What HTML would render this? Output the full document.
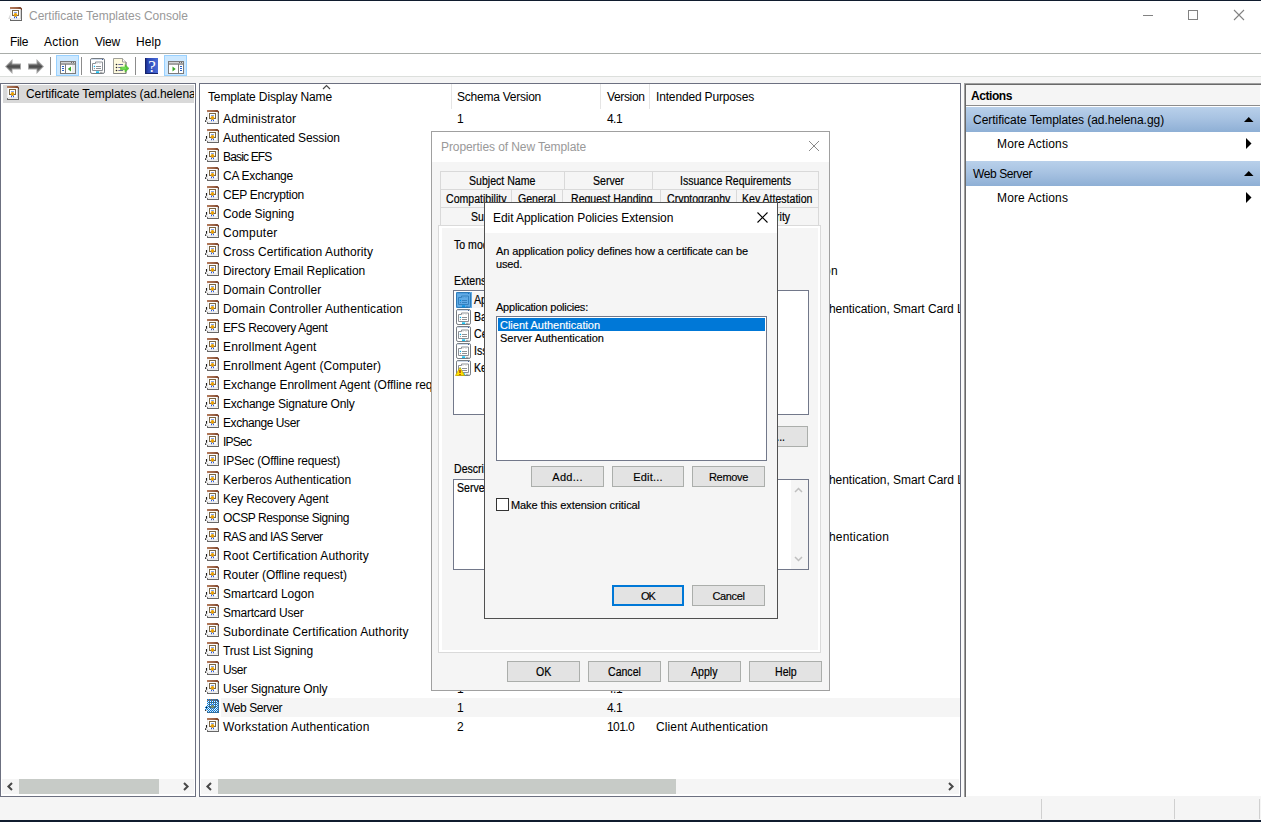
<!DOCTYPE html>
<html><head><meta charset="utf-8"><title>Certificate Templates Console</title><style>
html,body{margin:0;padding:0}
body{width:1261px;height:822px;overflow:hidden;background:#fff;position:relative;font-family:"Liberation Sans",sans-serif}
.abs{position:absolute;box-sizing:content-box}
.ic{position:absolute;overflow:visible}
.tx{position:absolute;white-space:pre;line-height:16px;color:#000}
.s{font:12px/16px "Liberation Sans",sans-serif}
.sb{font:bold 12px/16px "Liberation Sans",sans-serif}
.t{font:11px/16px "Liberation Sans",sans-serif;-webkit-text-stroke:.15px}
.m{font:12px/16px "Liberation Sans",sans-serif;-webkit-text-stroke:.2px}
</style></head>
<body>
<svg width="0" height="0" style="position:absolute"><defs>
<linearGradient id="gb" x1="0" y1="0" x2="1" y2="0"><stop offset="0" stop-color="#b47c5e"/><stop offset=".6" stop-color="#9c6244"/><stop offset="1" stop-color="#6e3620"/></linearGradient>
<pattern id="dith" width="2" height="2" patternUnits="userSpaceOnUse"><rect x="0" y="0" width="1" height="1" fill="#0078d7"/><rect x="1" y="1" width="1" height="1" fill="#0078d7"/></pattern>

</defs></svg>
<div class="abs" style="left:0;top:0;width:1261px;height:1px;background:#101c2e"></div>
<div class="abs" style="left:0;top:820px;width:1261px;height:2px;background:#101c2e"></div>
<svg class="ic" style="left:8px;top:7px" width="14" height="14" viewBox="-2 0 14 14" ><rect x="0" y="1" width="12" height="13" fill="#fcfcfc"/> <path d="M0 0h10.500l1.500 1.500v2.500h-1v-2h-11z" fill="url(#gb)"/> <rect x="10" y="2" width="1" height="10" fill="#d4d4d4"/> <rect x="11" y="3" width="1" height="11" fill="#6a6a6a"/> <rect x="0" y="2" width="1" height="10" fill="#ececec"/> <rect x="1" y="11.500" width="9.500" height="1" fill="#dcdcdc"/> <rect x="0" y="13" width="12" height="1" fill="#666"/> <rect x="0" y="12" width="1" height="1" fill="#777"/> <rect x="2.500" y="3.500" width="6" height="5" fill="#fff" stroke="#7a6644" stroke-width="1"/> <rect x="4" y="5" width="3" height="1" fill="#86a4ea"/> <rect x="4" y="9.500" width="1" height="1.700" fill="#2456e0"/><rect x="6" y="9.500" width="1" height="1.700" fill="#2456e0"/> <circle cx="5.500" cy="7.700" r="1.800" fill="#e8a008"/> <path d="M4.300 8.500l1.200 1.800 1.200-1.800z" fill="#dc9400"/><path d="M0 7.500l-1.800 4.500h1.800z" fill="#dadada"/></svg>
<span class="tx s" style="left:29px;top:8px;letter-spacing:-0.01px;color:#999">Certificate Templates Console</span>
<svg class="ic" style="left:1130px;top:1px" width="131" height="30"><path d="M13 14.500h10" stroke="#828282" stroke-width="1"/><rect x="58.500" y="9.500" width="9" height="9" fill="none" stroke="#828282"/><path d="M104 9l10 10M114 9l-10 10" stroke="#828282" stroke-width="1.100"/></svg>
<span class="tx s" style="left:10px;top:34px;letter-spacing:-0.34px;">File</span>
<span class="tx s" style="left:44px;top:34px;letter-spacing:0.27px;">Action</span>
<span class="tx s" style="left:95px;top:34px;letter-spacing:-0.2px;">View</span>
<span class="tx s" style="left:136px;top:34px;letter-spacing:0.08px;">Help</span>
<div class="abs" style="left:0;top:53px;width:1261px;height:1px;background:#a9adaa"></div>
<div class="abs" style="left:0;top:76px;width:1261px;height:1px;background:#dcdfdc"></div>
<div class="abs" style="left:0;top:77px;width:1261px;height:6px;background:#f5f5f5"></div>
<svg class="ic" style="left:0;top:54px" width="200" height="22">
<defs><linearGradient id="ga" x1="0" y1="0" x2="0" y2="1"><stop offset="0" stop-color="#8a8a8a"/><stop offset=".5" stop-color="#4e4e4e"/><stop offset="1" stop-color="#7c7c7c"/></linearGradient>
<linearGradient id="gh" x1="0" y1="0" x2="1" y2="0"><stop offset="0" stop-color="#16287c"/><stop offset=".25" stop-color="#2a46b4"/><stop offset="1" stop-color="#4a6cd8"/></linearGradient></defs>
<path d="M5 12.500l7.500-7.500v4.500h8.500v6h-8.500v4.500z" fill="#a6a6a6"/><path d="M6.400 12.500l5.300-5.300v3.200h8.300v4.200h-8.300v3.200z" fill="url(#ga)"/>
<path d="M44 12.500l-7.500-7.500v4.500h-8.500v6h8.500v4.500z" fill="#a6a6a6"/><path d="M42.600 12.500l-5.300-5.300v3.200h-8.300v4.200h8.300v3.200z" fill="url(#ga)"/>
<path d="M50.500 3v18M81.500 3v18M135.500 3v18" stroke="#8c8c8c"/>
<rect x="56.500" y="1.500" width="22" height="20" fill="#cce8ff" stroke="#99d1ff"/>
<rect x="164.500" y="1.500" width="22" height="20" fill="#cce8ff" stroke="#99d1ff"/>
<!-- show/hide tree -->
<g transform="translate(60,7)"><rect x=".5" y=".5" width="15" height="12" fill="#fff" stroke="#7b7b7b"/><path d="M1 3h14" stroke="#7b7b7b" stroke-width="1.400"/><path d="M1 1.500h14" stroke="#d4d4d4"/><path d="M11 1.500h1M13 1.500h1" stroke="#6a6a6a"/><path d="M5.500 3v10" stroke="#7b7b7b"/><path d="M2 5.500h2M2 7.500h2M2 9.500h2" stroke="#2a62c8"/><path d="M11 5.500v5l-3.200-2.500z" fill="#3aa827"/><rect x="12" y="4" width="3" height="8" fill="#eee"/></g>
<!-- action pane -->
<g transform="translate(168,7)"><rect x=".5" y=".5" width="15" height="12" fill="#fff" stroke="#7b7b7b"/><path d="M1 3h14" stroke="#7b7b7b" stroke-width="1.400"/><path d="M1 1.500h14" stroke="#d4d4d4"/><path d="M11 1.500h1M13 1.500h1" stroke="#6a6a6a"/><path d="M10.500 3v10" stroke="#7b7b7b"/><path d="M12 5.500h2M12 7.500h2M12 9.500h2" stroke="#2a62c8"/><path d="M4.500 5.500v5l3.200-2.500z" fill="#3aa827"/></g>
<!-- properties -->
<g transform="translate(90,4)"><rect x=".5" y=".5" width="14" height="15" rx="1.600" fill="#fff" stroke="#767c82"/> <path d="M1.500 1.500h11" stroke="#d0dcec"/><rect x="12" y="1" width="1" height="1" fill="#3a5a9a"/> <path d="M2.500 12.500v-7h3v-1.500h7v8.500z" fill="#fff" stroke="#8c9096"/> <path d="M6 5.500h2M9 5.500h2" stroke="#e8e8e8"/> <rect x="3.800" y="7.800" width="1.300" height="1.300" fill="#00b0f0"/><rect x="3.900" y="10" width="1.100" height="1.100" fill="#9a9a9a"/> <path d="M6 8.500h5M6 10.500h5" stroke="#8e9296"/> <rect x="6" y="13.300" width="3.200" height="1.700" fill="#1cc0f0"/><rect x="10" y="13.800" width="2.600" height="1.200" fill="#b0b0b0"/></g>
<!-- export list -->
<g transform="translate(113,4)"><path d="M.5 .5h9l3.500 3.500v11.500h-12.500z" fill="#fdf9dc" stroke="#a0a098"/><path d="M13 4v11.500h-12.500" fill="none" stroke="#828282"/><path d="M9.500 .5v3.500h3.500" fill="#fff" stroke="#a0a098"/><circle cx="3.500" cy="6.500" r=".8" fill="#222"/><circle cx="3.500" cy="9.500" r=".8" fill="#222"/><circle cx="3.500" cy="12.500" r=".8" fill="#222"/><path d="M5.300 6.500h4.700M5.300 9.500h3M5.300 12.500h4.700" stroke="#6a6c9c"/><path d="M7.500 9h4.500v-2.500l4 3.900-4 3.900v-2.500h-4.500z" fill="#58cc38" stroke="#48b82c" stroke-width=".5"/><path d="M8.500 10h4.500" stroke="#9ae880" stroke-width=".8"/></g>
<!-- help -->
<g transform="translate(145,4)"><rect x="0" y="0" width="13" height="16" fill="url(#gh)"/><path d="M.5 0v15.500h12.500" stroke="#14226a" fill="none"/><text x="7" y="14" font-family="Liberation Serif" font-size="17" fill="#fff" text-anchor="middle">?</text></g>
</svg>
<div class="abs" style="left:0;top:83px;width:194px;height:712px;border:1px solid #6c7080;background:#fff"></div>
<div class="abs" style="left:199px;top:83px;width:760px;height:712px;border:1px solid #6c7080;background:#fff"></div>
<div class="abs" style="left:964px;top:83px;width:297px;height:714px;background:#a0a0a0"></div>
<div class="abs" style="left:965px;top:84px;width:296px;height:713px;background:#696969"></div>
<div class="abs" style="left:966px;top:85px;width:295px;height:712px;background:#fff"></div>
<div class="abs" style="left:966px;top:796px;width:295px;height:1px;background:#f5f5f5"></div>
<div class="abs" style="left:0;top:797px;width:1261px;height:23px;background:#f5f5f5"></div>
<div class="abs" style="left:1041px;top:799px;width:1px;height:20px;background:#d0d0d0"></div>
<div class="abs" style="left:1174px;top:799px;width:1px;height:20px;background:#d0d0d0"></div>
<div class="abs" style="left:1259px;top:799px;width:1px;height:20px;background:#d0d0d0"></div>
<div class="abs" style="left:196px;top:83px;width:3px;height:714px;background:#fafafa"></div>
<div class="abs" style="left:961px;top:83px;width:3px;height:714px;background:#fafafa"></div>
<div class="abs" style="left:3px;top:85px;width:191px;height:18px;background:#d9d9d9"></div>
<svg class="ic" style="left:5px;top:86px" width="14" height="14" viewBox="-2 0 14 14" ><rect x="0" y="1" width="12" height="13" fill="#fcfcfc"/> <path d="M0 0h10.500l1.500 1.500v2.500h-1v-2h-11z" fill="url(#gb)"/> <rect x="10" y="2" width="1" height="10" fill="#d4d4d4"/> <rect x="11" y="3" width="1" height="11" fill="#6a6a6a"/> <rect x="0" y="2" width="1" height="10" fill="#ececec"/> <rect x="1" y="11.500" width="9.500" height="1" fill="#dcdcdc"/> <rect x="0" y="13" width="12" height="1" fill="#666"/> <rect x="0" y="12" width="1" height="1" fill="#777"/> <rect x="2.500" y="3.500" width="6" height="5" fill="#fff" stroke="#7a6644" stroke-width="1"/> <rect x="4" y="5" width="3" height="1" fill="#86a4ea"/> <rect x="4" y="9.500" width="1" height="1.700" fill="#2456e0"/><rect x="6" y="9.500" width="1" height="1.700" fill="#2456e0"/> <circle cx="5.500" cy="7.700" r="1.800" fill="#e8a008"/> <path d="M4.300 8.500l1.200 1.800 1.200-1.800z" fill="#dc9400"/><path d="M0 7.500l-1.800 4.500h1.800z" fill="#dadada"/></svg>
<div class="abs" style="left:26px;top:85px;width:168px;height:18px;overflow:hidden"><span class="tx s" style="left:0px;top:1px;letter-spacing:-0.07px;">Certificate Templates (ad.helena.gg)</span></div>
<div class="abs" style="left:2px;top:779px;width:192px;height:15px;background:#f5f5f5"></div><div class="abs" style="left:19px;top:779px;width:140px;height:15px;background:#c7cbc7"></div><svg class="ic" style="left:2px;top:779px" width="192" height="15"><path d="M10 4l-3.600 3.500 3.600 3.500" stroke="#484848" stroke-width="2" fill="none"/><path d="M182 4l3.600 3.500-3.600 3.500" stroke="#484848" stroke-width="2" fill="none"/></svg>
<div class="abs" style="left:201px;top:779px;width:758px;height:15px;background:#f5f5f5"></div><div class="abs" style="left:218px;top:779px;width:458px;height:15px;background:#c7cbc7"></div><svg class="ic" style="left:201px;top:779px" width="758" height="15"><path d="M10 4l-3.600 3.500 3.600 3.500" stroke="#484848" stroke-width="2" fill="none"/><path d="M748 4l3.600 3.500-3.600 3.500" stroke="#484848" stroke-width="2" fill="none"/></svg>
<div class="abs" style="left:451px;top:84px;width:1px;height:25px;background:#e5e5e5"></div>
<div class="abs" style="left:600px;top:84px;width:1px;height:25px;background:#e5e5e5"></div>
<div class="abs" style="left:649px;top:84px;width:1px;height:25px;background:#e5e5e5"></div>
<svg class="ic" style="left:321px;top:84px" width="12" height="6"><path d="M2 5l3.500-3.500 3.500 3.500" stroke="#4a4a4a" stroke-width="1.200" fill="none"/></svg>
<span class="tx s" style="left:208px;top:89px;letter-spacing:-0.13px;">Template Display Name</span>
<span class="tx s" style="left:457px;top:89px;letter-spacing:-0.24px;">Schema Version</span>
<span class="tx s" style="left:607px;top:89px;letter-spacing:-0.36px;">Version</span>
<span class="tx s" style="left:656px;top:89px;letter-spacing:-0.16px;">Intended Purposes</span>
<div class="abs" style="left:200px;top:84px;width:760px;height:695px;overflow:hidden">
<svg class="ic" style="left:5px;top:26px" width="14" height="14" viewBox="-2 0 14 14" ><rect x="0" y="1" width="12" height="13" fill="#fcfcfc"/> <path d="M0 0h10.500l1.500 1.500v2.500h-1v-2h-11z" fill="url(#gb)"/> <rect x="10" y="2" width="1" height="10" fill="#d4d4d4"/> <rect x="11" y="3" width="1" height="11" fill="#6a6a6a"/> <rect x="0" y="2" width="1" height="10" fill="#ececec"/> <rect x="1" y="11.500" width="9.500" height="1" fill="#dcdcdc"/> <rect x="0" y="13" width="12" height="1" fill="#666"/> <rect x="0" y="12" width="1" height="1" fill="#777"/> <rect x="2.500" y="3.500" width="6" height="5" fill="#fff" stroke="#7a6644" stroke-width="1"/> <rect x="4" y="5" width="3" height="1" fill="#86a4ea"/> <rect x="4" y="9.500" width="1" height="1.700" fill="#2456e0"/><rect x="6" y="9.500" width="1" height="1.700" fill="#2456e0"/> <circle cx="5.500" cy="7.700" r="1.800" fill="#e8a008"/> <path d="M4.300 8.500l1.200 1.800 1.200-1.800z" fill="#dc9400"/><path d="M-.5 7v2.800M-1.300 10.200v1.700" stroke="#1a1a1a" stroke-width="1.100"/></svg>
<span class="tx s" style="left:23px;top:27px;letter-spacing:0.2px;">Administrator</span>
<span class="tx s" style="left:257px;top:27px;">1</span>
<span class="tx s" style="left:407px;top:27px;letter-spacing:-0.56px;">4.1</span>
<svg class="ic" style="left:5px;top:45px" width="14" height="14" viewBox="-2 0 14 14" ><rect x="0" y="1" width="12" height="13" fill="#fcfcfc"/> <path d="M0 0h10.500l1.500 1.500v2.500h-1v-2h-11z" fill="url(#gb)"/> <rect x="10" y="2" width="1" height="10" fill="#d4d4d4"/> <rect x="11" y="3" width="1" height="11" fill="#6a6a6a"/> <rect x="0" y="2" width="1" height="10" fill="#ececec"/> <rect x="1" y="11.500" width="9.500" height="1" fill="#dcdcdc"/> <rect x="0" y="13" width="12" height="1" fill="#666"/> <rect x="0" y="12" width="1" height="1" fill="#777"/> <rect x="2.500" y="3.500" width="6" height="5" fill="#fff" stroke="#7a6644" stroke-width="1"/> <rect x="4" y="5" width="3" height="1" fill="#86a4ea"/> <rect x="4" y="9.500" width="1" height="1.700" fill="#2456e0"/><rect x="6" y="9.500" width="1" height="1.700" fill="#2456e0"/> <circle cx="5.500" cy="7.700" r="1.800" fill="#e8a008"/> <path d="M4.300 8.500l1.200 1.800 1.200-1.800z" fill="#dc9400"/><path d="M-.5 7v2.800M-1.300 10.200v1.700" stroke="#1a1a1a" stroke-width="1.100"/></svg>
<span class="tx s" style="left:23px;top:46px;letter-spacing:-0.12px;">Authenticated Session</span>
<span class="tx s" style="left:257px;top:46px;">1</span>
<span class="tx s" style="left:407px;top:46px;letter-spacing:-0.56px;">3.1</span>
<svg class="ic" style="left:5px;top:64px" width="14" height="14" viewBox="-2 0 14 14" ><rect x="0" y="1" width="12" height="13" fill="#fcfcfc"/> <path d="M0 0h10.500l1.500 1.500v2.500h-1v-2h-11z" fill="url(#gb)"/> <rect x="10" y="2" width="1" height="10" fill="#d4d4d4"/> <rect x="11" y="3" width="1" height="11" fill="#6a6a6a"/> <rect x="0" y="2" width="1" height="10" fill="#ececec"/> <rect x="1" y="11.500" width="9.500" height="1" fill="#dcdcdc"/> <rect x="0" y="13" width="12" height="1" fill="#666"/> <rect x="0" y="12" width="1" height="1" fill="#777"/> <rect x="2.500" y="3.500" width="6" height="5" fill="#fff" stroke="#7a6644" stroke-width="1"/> <rect x="4" y="5" width="3" height="1" fill="#86a4ea"/> <rect x="4" y="9.500" width="1" height="1.700" fill="#2456e0"/><rect x="6" y="9.500" width="1" height="1.700" fill="#2456e0"/> <circle cx="5.500" cy="7.700" r="1.800" fill="#e8a008"/> <path d="M4.300 8.500l1.200 1.800 1.200-1.800z" fill="#dc9400"/><path d="M-.5 7v2.800M-1.300 10.200v1.700" stroke="#1a1a1a" stroke-width="1.100"/></svg>
<span class="tx s" style="left:23px;top:65px;letter-spacing:-0.84px;">Basic EFS</span>
<span class="tx s" style="left:257px;top:65px;">1</span>
<span class="tx s" style="left:407px;top:65px;letter-spacing:-0.56px;">3.1</span>
<svg class="ic" style="left:5px;top:83px" width="14" height="14" viewBox="-2 0 14 14" ><rect x="0" y="1" width="12" height="13" fill="#fcfcfc"/> <path d="M0 0h10.500l1.500 1.500v2.500h-1v-2h-11z" fill="url(#gb)"/> <rect x="10" y="2" width="1" height="10" fill="#d4d4d4"/> <rect x="11" y="3" width="1" height="11" fill="#6a6a6a"/> <rect x="0" y="2" width="1" height="10" fill="#ececec"/> <rect x="1" y="11.500" width="9.500" height="1" fill="#dcdcdc"/> <rect x="0" y="13" width="12" height="1" fill="#666"/> <rect x="0" y="12" width="1" height="1" fill="#777"/> <rect x="2.500" y="3.500" width="6" height="5" fill="#fff" stroke="#7a6644" stroke-width="1"/> <rect x="4" y="5" width="3" height="1" fill="#86a4ea"/> <rect x="4" y="9.500" width="1" height="1.700" fill="#2456e0"/><rect x="6" y="9.500" width="1" height="1.700" fill="#2456e0"/> <circle cx="5.500" cy="7.700" r="1.800" fill="#e8a008"/> <path d="M4.300 8.500l1.200 1.800 1.200-1.800z" fill="#dc9400"/><path d="M-.5 7v2.800M-1.300 10.200v1.700" stroke="#1a1a1a" stroke-width="1.100"/></svg>
<span class="tx s" style="left:23px;top:84px;letter-spacing:-0.25px;">CA Exchange</span>
<span class="tx s" style="left:257px;top:84px;">2</span>
<span class="tx s" style="left:407px;top:84px;letter-spacing:-0.61px;">106.0</span>
<span class="tx s" style="left:456px;top:84px;letter-spacing:-0.14px;">Private Key Archival</span>
<svg class="ic" style="left:5px;top:102px" width="14" height="14" viewBox="-2 0 14 14" ><rect x="0" y="1" width="12" height="13" fill="#fcfcfc"/> <path d="M0 0h10.500l1.500 1.500v2.500h-1v-2h-11z" fill="url(#gb)"/> <rect x="10" y="2" width="1" height="10" fill="#d4d4d4"/> <rect x="11" y="3" width="1" height="11" fill="#6a6a6a"/> <rect x="0" y="2" width="1" height="10" fill="#ececec"/> <rect x="1" y="11.500" width="9.500" height="1" fill="#dcdcdc"/> <rect x="0" y="13" width="12" height="1" fill="#666"/> <rect x="0" y="12" width="1" height="1" fill="#777"/> <rect x="2.500" y="3.500" width="6" height="5" fill="#fff" stroke="#7a6644" stroke-width="1"/> <rect x="4" y="5" width="3" height="1" fill="#86a4ea"/> <rect x="4" y="9.500" width="1" height="1.700" fill="#2456e0"/><rect x="6" y="9.500" width="1" height="1.700" fill="#2456e0"/> <circle cx="5.500" cy="7.700" r="1.800" fill="#e8a008"/> <path d="M4.300 8.500l1.200 1.800 1.200-1.800z" fill="#dc9400"/><path d="M-.5 7v2.800M-1.300 10.200v1.700" stroke="#1a1a1a" stroke-width="1.100"/></svg>
<span class="tx s" style="left:23px;top:103px;letter-spacing:-0.25px;">CEP Encryption</span>
<span class="tx s" style="left:257px;top:103px;">1</span>
<span class="tx s" style="left:407px;top:103px;letter-spacing:-0.56px;">4.1</span>
<svg class="ic" style="left:5px;top:121px" width="14" height="14" viewBox="-2 0 14 14" ><rect x="0" y="1" width="12" height="13" fill="#fcfcfc"/> <path d="M0 0h10.500l1.500 1.500v2.500h-1v-2h-11z" fill="url(#gb)"/> <rect x="10" y="2" width="1" height="10" fill="#d4d4d4"/> <rect x="11" y="3" width="1" height="11" fill="#6a6a6a"/> <rect x="0" y="2" width="1" height="10" fill="#ececec"/> <rect x="1" y="11.500" width="9.500" height="1" fill="#dcdcdc"/> <rect x="0" y="13" width="12" height="1" fill="#666"/> <rect x="0" y="12" width="1" height="1" fill="#777"/> <rect x="2.500" y="3.500" width="6" height="5" fill="#fff" stroke="#7a6644" stroke-width="1"/> <rect x="4" y="5" width="3" height="1" fill="#86a4ea"/> <rect x="4" y="9.500" width="1" height="1.700" fill="#2456e0"/><rect x="6" y="9.500" width="1" height="1.700" fill="#2456e0"/> <circle cx="5.500" cy="7.700" r="1.800" fill="#e8a008"/> <path d="M4.300 8.500l1.200 1.800 1.200-1.800z" fill="#dc9400"/><path d="M-.5 7v2.800M-1.300 10.200v1.700" stroke="#1a1a1a" stroke-width="1.100"/></svg>
<span class="tx s" style="left:23px;top:122px;letter-spacing:-0.09px;">Code Signing</span>
<span class="tx s" style="left:257px;top:122px;">1</span>
<span class="tx s" style="left:407px;top:122px;letter-spacing:-0.56px;">3.1</span>
<svg class="ic" style="left:5px;top:140px" width="14" height="14" viewBox="-2 0 14 14" ><rect x="0" y="1" width="12" height="13" fill="#fcfcfc"/> <path d="M0 0h10.500l1.500 1.500v2.500h-1v-2h-11z" fill="url(#gb)"/> <rect x="10" y="2" width="1" height="10" fill="#d4d4d4"/> <rect x="11" y="3" width="1" height="11" fill="#6a6a6a"/> <rect x="0" y="2" width="1" height="10" fill="#ececec"/> <rect x="1" y="11.500" width="9.500" height="1" fill="#dcdcdc"/> <rect x="0" y="13" width="12" height="1" fill="#666"/> <rect x="0" y="12" width="1" height="1" fill="#777"/> <rect x="2.500" y="3.500" width="6" height="5" fill="#fff" stroke="#7a6644" stroke-width="1"/> <rect x="4" y="5" width="3" height="1" fill="#86a4ea"/> <rect x="4" y="9.500" width="1" height="1.700" fill="#2456e0"/><rect x="6" y="9.500" width="1" height="1.700" fill="#2456e0"/> <circle cx="5.500" cy="7.700" r="1.800" fill="#e8a008"/> <path d="M4.300 8.500l1.200 1.800 1.200-1.800z" fill="#dc9400"/><path d="M-.5 7v2.800M-1.300 10.200v1.700" stroke="#1a1a1a" stroke-width="1.100"/></svg>
<span class="tx s" style="left:23px;top:141px;letter-spacing:0.23px;">Computer</span>
<span class="tx s" style="left:257px;top:141px;">1</span>
<span class="tx s" style="left:407px;top:141px;letter-spacing:-0.56px;">5.1</span>
<svg class="ic" style="left:5px;top:159px" width="14" height="14" viewBox="-2 0 14 14" ><rect x="0" y="1" width="12" height="13" fill="#fcfcfc"/> <path d="M0 0h10.500l1.500 1.500v2.500h-1v-2h-11z" fill="url(#gb)"/> <rect x="10" y="2" width="1" height="10" fill="#d4d4d4"/> <rect x="11" y="3" width="1" height="11" fill="#6a6a6a"/> <rect x="0" y="2" width="1" height="10" fill="#ececec"/> <rect x="1" y="11.500" width="9.500" height="1" fill="#dcdcdc"/> <rect x="0" y="13" width="12" height="1" fill="#666"/> <rect x="0" y="12" width="1" height="1" fill="#777"/> <rect x="2.500" y="3.500" width="6" height="5" fill="#fff" stroke="#7a6644" stroke-width="1"/> <rect x="4" y="5" width="3" height="1" fill="#86a4ea"/> <rect x="4" y="9.500" width="1" height="1.700" fill="#2456e0"/><rect x="6" y="9.500" width="1" height="1.700" fill="#2456e0"/> <circle cx="5.500" cy="7.700" r="1.800" fill="#e8a008"/> <path d="M4.300 8.500l1.200 1.800 1.200-1.800z" fill="#dc9400"/><path d="M-.5 7v2.800M-1.300 10.200v1.700" stroke="#1a1a1a" stroke-width="1.100"/></svg>
<span class="tx s" style="left:23px;top:160px;letter-spacing:0.07px;">Cross Certification Authority</span>
<span class="tx s" style="left:257px;top:160px;">2</span>
<span class="tx s" style="left:407px;top:160px;letter-spacing:-0.61px;">105.0</span>
<svg class="ic" style="left:5px;top:178px" width="14" height="14" viewBox="-2 0 14 14" ><rect x="0" y="1" width="12" height="13" fill="#fcfcfc"/> <path d="M0 0h10.500l1.500 1.500v2.500h-1v-2h-11z" fill="url(#gb)"/> <rect x="10" y="2" width="1" height="10" fill="#d4d4d4"/> <rect x="11" y="3" width="1" height="11" fill="#6a6a6a"/> <rect x="0" y="2" width="1" height="10" fill="#ececec"/> <rect x="1" y="11.500" width="9.500" height="1" fill="#dcdcdc"/> <rect x="0" y="13" width="12" height="1" fill="#666"/> <rect x="0" y="12" width="1" height="1" fill="#777"/> <rect x="2.500" y="3.500" width="6" height="5" fill="#fff" stroke="#7a6644" stroke-width="1"/> <rect x="4" y="5" width="3" height="1" fill="#86a4ea"/> <rect x="4" y="9.500" width="1" height="1.700" fill="#2456e0"/><rect x="6" y="9.500" width="1" height="1.700" fill="#2456e0"/> <circle cx="5.500" cy="7.700" r="1.800" fill="#e8a008"/> <path d="M4.300 8.500l1.200 1.800 1.200-1.800z" fill="#dc9400"/><path d="M-.5 7v2.800M-1.300 10.200v1.700" stroke="#1a1a1a" stroke-width="1.100"/></svg>
<span class="tx s" style="left:23px;top:179px;letter-spacing:-0.07px;">Directory Email Replication</span>
<span class="tx s" style="left:257px;top:179px;">2</span>
<span class="tx s" style="left:407px;top:179px;letter-spacing:-0.43px;">115.0</span>
<span class="tx s" style="left:456px;top:179px;letter-spacing:-0.18px;">Directory Service Email Replicati</span>
<span class="tx s" style="left:624px;top:179px;letter-spacing:0.32px;">on</span>
<svg class="ic" style="left:5px;top:197px" width="14" height="14" viewBox="-2 0 14 14" ><rect x="0" y="1" width="12" height="13" fill="#fcfcfc"/> <path d="M0 0h10.500l1.500 1.500v2.500h-1v-2h-11z" fill="url(#gb)"/> <rect x="10" y="2" width="1" height="10" fill="#d4d4d4"/> <rect x="11" y="3" width="1" height="11" fill="#6a6a6a"/> <rect x="0" y="2" width="1" height="10" fill="#ececec"/> <rect x="1" y="11.500" width="9.500" height="1" fill="#dcdcdc"/> <rect x="0" y="13" width="12" height="1" fill="#666"/> <rect x="0" y="12" width="1" height="1" fill="#777"/> <rect x="2.500" y="3.500" width="6" height="5" fill="#fff" stroke="#7a6644" stroke-width="1"/> <rect x="4" y="5" width="3" height="1" fill="#86a4ea"/> <rect x="4" y="9.500" width="1" height="1.700" fill="#2456e0"/><rect x="6" y="9.500" width="1" height="1.700" fill="#2456e0"/> <circle cx="5.500" cy="7.700" r="1.800" fill="#e8a008"/> <path d="M4.300 8.500l1.200 1.800 1.200-1.800z" fill="#dc9400"/><path d="M-.5 7v2.800M-1.300 10.200v1.700" stroke="#1a1a1a" stroke-width="1.100"/></svg>
<span class="tx s" style="left:23px;top:198px;letter-spacing:0.09px;">Domain Controller</span>
<span class="tx s" style="left:257px;top:198px;">1</span>
<span class="tx s" style="left:407px;top:198px;letter-spacing:-0.56px;">4.1</span>
<svg class="ic" style="left:5px;top:216px" width="14" height="14" viewBox="-2 0 14 14" ><rect x="0" y="1" width="12" height="13" fill="#fcfcfc"/> <path d="M0 0h10.500l1.500 1.500v2.500h-1v-2h-11z" fill="url(#gb)"/> <rect x="10" y="2" width="1" height="10" fill="#d4d4d4"/> <rect x="11" y="3" width="1" height="11" fill="#6a6a6a"/> <rect x="0" y="2" width="1" height="10" fill="#ececec"/> <rect x="1" y="11.500" width="9.500" height="1" fill="#dcdcdc"/> <rect x="0" y="13" width="12" height="1" fill="#666"/> <rect x="0" y="12" width="1" height="1" fill="#777"/> <rect x="2.500" y="3.500" width="6" height="5" fill="#fff" stroke="#7a6644" stroke-width="1"/> <rect x="4" y="5" width="3" height="1" fill="#86a4ea"/> <rect x="4" y="9.500" width="1" height="1.700" fill="#2456e0"/><rect x="6" y="9.500" width="1" height="1.700" fill="#2456e0"/> <circle cx="5.500" cy="7.700" r="1.800" fill="#e8a008"/> <path d="M4.300 8.500l1.200 1.800 1.200-1.800z" fill="#dc9400"/><path d="M-.5 7v2.800M-1.300 10.200v1.700" stroke="#1a1a1a" stroke-width="1.100"/></svg>
<span class="tx s" style="left:23px;top:217px;letter-spacing:0.14px;">Domain Controller Authentication</span>
<span class="tx s" style="left:257px;top:217px;">2</span>
<span class="tx s" style="left:407px;top:217px;letter-spacing:-0.43px;">110.0</span>
<span class="tx s" style="left:456px;top:217px;">Client Authentication, Server Aut</span>
<span class="tx s" style="left:629px;top:217px;letter-spacing:-0.06px;">hentication, Smart Card Logon</span>
<svg class="ic" style="left:5px;top:235px" width="14" height="14" viewBox="-2 0 14 14" ><rect x="0" y="1" width="12" height="13" fill="#fcfcfc"/> <path d="M0 0h10.500l1.500 1.500v2.500h-1v-2h-11z" fill="url(#gb)"/> <rect x="10" y="2" width="1" height="10" fill="#d4d4d4"/> <rect x="11" y="3" width="1" height="11" fill="#6a6a6a"/> <rect x="0" y="2" width="1" height="10" fill="#ececec"/> <rect x="1" y="11.500" width="9.500" height="1" fill="#dcdcdc"/> <rect x="0" y="13" width="12" height="1" fill="#666"/> <rect x="0" y="12" width="1" height="1" fill="#777"/> <rect x="2.500" y="3.500" width="6" height="5" fill="#fff" stroke="#7a6644" stroke-width="1"/> <rect x="4" y="5" width="3" height="1" fill="#86a4ea"/> <rect x="4" y="9.500" width="1" height="1.700" fill="#2456e0"/><rect x="6" y="9.500" width="1" height="1.700" fill="#2456e0"/> <circle cx="5.500" cy="7.700" r="1.800" fill="#e8a008"/> <path d="M4.300 8.500l1.200 1.800 1.200-1.800z" fill="#dc9400"/><path d="M-.5 7v2.800M-1.300 10.200v1.700" stroke="#1a1a1a" stroke-width="1.100"/></svg>
<span class="tx s" style="left:23px;top:236px;letter-spacing:-0.38px;">EFS Recovery Agent</span>
<span class="tx s" style="left:257px;top:236px;">1</span>
<span class="tx s" style="left:407px;top:236px;letter-spacing:-0.56px;">6.1</span>
<svg class="ic" style="left:5px;top:254px" width="14" height="14" viewBox="-2 0 14 14" ><rect x="0" y="1" width="12" height="13" fill="#fcfcfc"/> <path d="M0 0h10.500l1.500 1.500v2.500h-1v-2h-11z" fill="url(#gb)"/> <rect x="10" y="2" width="1" height="10" fill="#d4d4d4"/> <rect x="11" y="3" width="1" height="11" fill="#6a6a6a"/> <rect x="0" y="2" width="1" height="10" fill="#ececec"/> <rect x="1" y="11.500" width="9.500" height="1" fill="#dcdcdc"/> <rect x="0" y="13" width="12" height="1" fill="#666"/> <rect x="0" y="12" width="1" height="1" fill="#777"/> <rect x="2.500" y="3.500" width="6" height="5" fill="#fff" stroke="#7a6644" stroke-width="1"/> <rect x="4" y="5" width="3" height="1" fill="#86a4ea"/> <rect x="4" y="9.500" width="1" height="1.700" fill="#2456e0"/><rect x="6" y="9.500" width="1" height="1.700" fill="#2456e0"/> <circle cx="5.500" cy="7.700" r="1.800" fill="#e8a008"/> <path d="M4.300 8.500l1.200 1.800 1.200-1.800z" fill="#dc9400"/><path d="M-.5 7v2.800M-1.300 10.200v1.700" stroke="#1a1a1a" stroke-width="1.100"/></svg>
<span class="tx s" style="left:23px;top:255px;letter-spacing:0.13px;">Enrollment Agent</span>
<span class="tx s" style="left:257px;top:255px;">1</span>
<span class="tx s" style="left:407px;top:255px;letter-spacing:-0.56px;">4.1</span>
<svg class="ic" style="left:5px;top:273px" width="14" height="14" viewBox="-2 0 14 14" ><rect x="0" y="1" width="12" height="13" fill="#fcfcfc"/> <path d="M0 0h10.500l1.500 1.500v2.500h-1v-2h-11z" fill="url(#gb)"/> <rect x="10" y="2" width="1" height="10" fill="#d4d4d4"/> <rect x="11" y="3" width="1" height="11" fill="#6a6a6a"/> <rect x="0" y="2" width="1" height="10" fill="#ececec"/> <rect x="1" y="11.500" width="9.500" height="1" fill="#dcdcdc"/> <rect x="0" y="13" width="12" height="1" fill="#666"/> <rect x="0" y="12" width="1" height="1" fill="#777"/> <rect x="2.500" y="3.500" width="6" height="5" fill="#fff" stroke="#7a6644" stroke-width="1"/> <rect x="4" y="5" width="3" height="1" fill="#86a4ea"/> <rect x="4" y="9.500" width="1" height="1.700" fill="#2456e0"/><rect x="6" y="9.500" width="1" height="1.700" fill="#2456e0"/> <circle cx="5.500" cy="7.700" r="1.800" fill="#e8a008"/> <path d="M4.300 8.500l1.200 1.800 1.200-1.800z" fill="#dc9400"/><path d="M-.5 7v2.800M-1.300 10.200v1.700" stroke="#1a1a1a" stroke-width="1.100"/></svg>
<span class="tx s" style="left:23px;top:274px;letter-spacing:0.1px;">Enrollment Agent (Computer)</span>
<span class="tx s" style="left:257px;top:274px;">1</span>
<span class="tx s" style="left:407px;top:274px;letter-spacing:-0.56px;">5.1</span>
<svg class="ic" style="left:5px;top:292px" width="14" height="14" viewBox="-2 0 14 14" ><rect x="0" y="1" width="12" height="13" fill="#fcfcfc"/> <path d="M0 0h10.500l1.500 1.500v2.500h-1v-2h-11z" fill="url(#gb)"/> <rect x="10" y="2" width="1" height="10" fill="#d4d4d4"/> <rect x="11" y="3" width="1" height="11" fill="#6a6a6a"/> <rect x="0" y="2" width="1" height="10" fill="#ececec"/> <rect x="1" y="11.500" width="9.500" height="1" fill="#dcdcdc"/> <rect x="0" y="13" width="12" height="1" fill="#666"/> <rect x="0" y="12" width="1" height="1" fill="#777"/> <rect x="2.500" y="3.500" width="6" height="5" fill="#fff" stroke="#7a6644" stroke-width="1"/> <rect x="4" y="5" width="3" height="1" fill="#86a4ea"/> <rect x="4" y="9.500" width="1" height="1.700" fill="#2456e0"/><rect x="6" y="9.500" width="1" height="1.700" fill="#2456e0"/> <circle cx="5.500" cy="7.700" r="1.800" fill="#e8a008"/> <path d="M4.300 8.500l1.200 1.800 1.200-1.800z" fill="#dc9400"/><path d="M-.5 7v2.800M-1.300 10.200v1.700" stroke="#1a1a1a" stroke-width="1.100"/></svg>
<span class="tx s" style="left:23px;top:293px;letter-spacing:-0.03px;">Exchange Enrollment Agent (Offline request)</span>
<span class="tx s" style="left:257px;top:293px;">1</span>
<span class="tx s" style="left:407px;top:293px;letter-spacing:-0.56px;">4.1</span>
<svg class="ic" style="left:5px;top:311px" width="14" height="14" viewBox="-2 0 14 14" ><rect x="0" y="1" width="12" height="13" fill="#fcfcfc"/> <path d="M0 0h10.500l1.500 1.500v2.500h-1v-2h-11z" fill="url(#gb)"/> <rect x="10" y="2" width="1" height="10" fill="#d4d4d4"/> <rect x="11" y="3" width="1" height="11" fill="#6a6a6a"/> <rect x="0" y="2" width="1" height="10" fill="#ececec"/> <rect x="1" y="11.500" width="9.500" height="1" fill="#dcdcdc"/> <rect x="0" y="13" width="12" height="1" fill="#666"/> <rect x="0" y="12" width="1" height="1" fill="#777"/> <rect x="2.500" y="3.500" width="6" height="5" fill="#fff" stroke="#7a6644" stroke-width="1"/> <rect x="4" y="5" width="3" height="1" fill="#86a4ea"/> <rect x="4" y="9.500" width="1" height="1.700" fill="#2456e0"/><rect x="6" y="9.500" width="1" height="1.700" fill="#2456e0"/> <circle cx="5.500" cy="7.700" r="1.800" fill="#e8a008"/> <path d="M4.300 8.500l1.200 1.800 1.200-1.800z" fill="#dc9400"/><path d="M-.5 7v2.800M-1.300 10.200v1.700" stroke="#1a1a1a" stroke-width="1.100"/></svg>
<span class="tx s" style="left:23px;top:312px;letter-spacing:-0.2px;">Exchange Signature Only</span>
<span class="tx s" style="left:257px;top:312px;">1</span>
<span class="tx s" style="left:407px;top:312px;letter-spacing:-0.56px;">6.1</span>
<svg class="ic" style="left:5px;top:330px" width="14" height="14" viewBox="-2 0 14 14" ><rect x="0" y="1" width="12" height="13" fill="#fcfcfc"/> <path d="M0 0h10.500l1.500 1.500v2.500h-1v-2h-11z" fill="url(#gb)"/> <rect x="10" y="2" width="1" height="10" fill="#d4d4d4"/> <rect x="11" y="3" width="1" height="11" fill="#6a6a6a"/> <rect x="0" y="2" width="1" height="10" fill="#ececec"/> <rect x="1" y="11.500" width="9.500" height="1" fill="#dcdcdc"/> <rect x="0" y="13" width="12" height="1" fill="#666"/> <rect x="0" y="12" width="1" height="1" fill="#777"/> <rect x="2.500" y="3.500" width="6" height="5" fill="#fff" stroke="#7a6644" stroke-width="1"/> <rect x="4" y="5" width="3" height="1" fill="#86a4ea"/> <rect x="4" y="9.500" width="1" height="1.700" fill="#2456e0"/><rect x="6" y="9.500" width="1" height="1.700" fill="#2456e0"/> <circle cx="5.500" cy="7.700" r="1.800" fill="#e8a008"/> <path d="M4.300 8.500l1.200 1.800 1.200-1.800z" fill="#dc9400"/><path d="M-.5 7v2.800M-1.300 10.200v1.700" stroke="#1a1a1a" stroke-width="1.100"/></svg>
<span class="tx s" style="left:23px;top:331px;letter-spacing:-0.43px;">Exchange User</span>
<span class="tx s" style="left:257px;top:331px;">1</span>
<span class="tx s" style="left:407px;top:331px;letter-spacing:-0.56px;">7.1</span>
<svg class="ic" style="left:5px;top:349px" width="14" height="14" viewBox="-2 0 14 14" ><rect x="0" y="1" width="12" height="13" fill="#fcfcfc"/> <path d="M0 0h10.500l1.500 1.500v2.500h-1v-2h-11z" fill="url(#gb)"/> <rect x="10" y="2" width="1" height="10" fill="#d4d4d4"/> <rect x="11" y="3" width="1" height="11" fill="#6a6a6a"/> <rect x="0" y="2" width="1" height="10" fill="#ececec"/> <rect x="1" y="11.500" width="9.500" height="1" fill="#dcdcdc"/> <rect x="0" y="13" width="12" height="1" fill="#666"/> <rect x="0" y="12" width="1" height="1" fill="#777"/> <rect x="2.500" y="3.500" width="6" height="5" fill="#fff" stroke="#7a6644" stroke-width="1"/> <rect x="4" y="5" width="3" height="1" fill="#86a4ea"/> <rect x="4" y="9.500" width="1" height="1.700" fill="#2456e0"/><rect x="6" y="9.500" width="1" height="1.700" fill="#2456e0"/> <circle cx="5.500" cy="7.700" r="1.800" fill="#e8a008"/> <path d="M4.300 8.500l1.200 1.800 1.200-1.800z" fill="#dc9400"/><path d="M-.5 7v2.800M-1.300 10.200v1.700" stroke="#1a1a1a" stroke-width="1.100"/></svg>
<span class="tx s" style="left:23px;top:350px;letter-spacing:-0.76px;">IPSec</span>
<span class="tx s" style="left:257px;top:350px;">1</span>
<span class="tx s" style="left:407px;top:350px;letter-spacing:-0.56px;">8.1</span>
<svg class="ic" style="left:5px;top:368px" width="14" height="14" viewBox="-2 0 14 14" ><rect x="0" y="1" width="12" height="13" fill="#fcfcfc"/> <path d="M0 0h10.500l1.500 1.500v2.500h-1v-2h-11z" fill="url(#gb)"/> <rect x="10" y="2" width="1" height="10" fill="#d4d4d4"/> <rect x="11" y="3" width="1" height="11" fill="#6a6a6a"/> <rect x="0" y="2" width="1" height="10" fill="#ececec"/> <rect x="1" y="11.500" width="9.500" height="1" fill="#dcdcdc"/> <rect x="0" y="13" width="12" height="1" fill="#666"/> <rect x="0" y="12" width="1" height="1" fill="#777"/> <rect x="2.500" y="3.500" width="6" height="5" fill="#fff" stroke="#7a6644" stroke-width="1"/> <rect x="4" y="5" width="3" height="1" fill="#86a4ea"/> <rect x="4" y="9.500" width="1" height="1.700" fill="#2456e0"/><rect x="6" y="9.500" width="1" height="1.700" fill="#2456e0"/> <circle cx="5.500" cy="7.700" r="1.800" fill="#e8a008"/> <path d="M4.300 8.500l1.200 1.800 1.200-1.800z" fill="#dc9400"/><path d="M-.5 7v2.800M-1.300 10.200v1.700" stroke="#1a1a1a" stroke-width="1.100"/></svg>
<span class="tx s" style="left:23px;top:369px;letter-spacing:-0.18px;">IPSec (Offline request)</span>
<span class="tx s" style="left:257px;top:369px;">1</span>
<span class="tx s" style="left:407px;top:369px;letter-spacing:-0.56px;">7.1</span>
<svg class="ic" style="left:5px;top:387px" width="14" height="14" viewBox="-2 0 14 14" ><rect x="0" y="1" width="12" height="13" fill="#fcfcfc"/> <path d="M0 0h10.500l1.500 1.500v2.500h-1v-2h-11z" fill="url(#gb)"/> <rect x="10" y="2" width="1" height="10" fill="#d4d4d4"/> <rect x="11" y="3" width="1" height="11" fill="#6a6a6a"/> <rect x="0" y="2" width="1" height="10" fill="#ececec"/> <rect x="1" y="11.500" width="9.500" height="1" fill="#dcdcdc"/> <rect x="0" y="13" width="12" height="1" fill="#666"/> <rect x="0" y="12" width="1" height="1" fill="#777"/> <rect x="2.500" y="3.500" width="6" height="5" fill="#fff" stroke="#7a6644" stroke-width="1"/> <rect x="4" y="5" width="3" height="1" fill="#86a4ea"/> <rect x="4" y="9.500" width="1" height="1.700" fill="#2456e0"/><rect x="6" y="9.500" width="1" height="1.700" fill="#2456e0"/> <circle cx="5.500" cy="7.700" r="1.800" fill="#e8a008"/> <path d="M4.300 8.500l1.200 1.800 1.200-1.800z" fill="#dc9400"/><path d="M-.5 7v2.800M-1.300 10.200v1.700" stroke="#1a1a1a" stroke-width="1.100"/></svg>
<span class="tx s" style="left:23px;top:388px;letter-spacing:0.03px;">Kerberos Authentication</span>
<span class="tx s" style="left:257px;top:388px;">2</span>
<span class="tx s" style="left:407px;top:388px;letter-spacing:-0.43px;">110.0</span>
<span class="tx s" style="left:456px;top:388px;">Client Authentication, Server Aut</span>
<span class="tx s" style="left:629px;top:388px;letter-spacing:-0.05px;">hentication, Smart Card Logon, KDC Authentication</span>
<svg class="ic" style="left:5px;top:406px" width="14" height="14" viewBox="-2 0 14 14" ><rect x="0" y="1" width="12" height="13" fill="#fcfcfc"/> <path d="M0 0h10.500l1.500 1.500v2.500h-1v-2h-11z" fill="url(#gb)"/> <rect x="10" y="2" width="1" height="10" fill="#d4d4d4"/> <rect x="11" y="3" width="1" height="11" fill="#6a6a6a"/> <rect x="0" y="2" width="1" height="10" fill="#ececec"/> <rect x="1" y="11.500" width="9.500" height="1" fill="#dcdcdc"/> <rect x="0" y="13" width="12" height="1" fill="#666"/> <rect x="0" y="12" width="1" height="1" fill="#777"/> <rect x="2.500" y="3.500" width="6" height="5" fill="#fff" stroke="#7a6644" stroke-width="1"/> <rect x="4" y="5" width="3" height="1" fill="#86a4ea"/> <rect x="4" y="9.500" width="1" height="1.700" fill="#2456e0"/><rect x="6" y="9.500" width="1" height="1.700" fill="#2456e0"/> <circle cx="5.500" cy="7.700" r="1.800" fill="#e8a008"/> <path d="M4.300 8.500l1.200 1.800 1.200-1.800z" fill="#dc9400"/><path d="M-.5 7v2.800M-1.300 10.200v1.700" stroke="#1a1a1a" stroke-width="1.100"/></svg>
<span class="tx s" style="left:23px;top:407px;letter-spacing:-0.19px;">Key Recovery Agent</span>
<span class="tx s" style="left:257px;top:407px;">2</span>
<span class="tx s" style="left:407px;top:407px;letter-spacing:-0.61px;">105.0</span>
<span class="tx s" style="left:456px;top:407px;letter-spacing:-0.21px;">Key Recovery Agent</span>
<svg class="ic" style="left:5px;top:425px" width="14" height="14" viewBox="-2 0 14 14" ><rect x="0" y="1" width="12" height="13" fill="#fcfcfc"/> <path d="M0 0h10.500l1.500 1.500v2.500h-1v-2h-11z" fill="url(#gb)"/> <rect x="10" y="2" width="1" height="10" fill="#d4d4d4"/> <rect x="11" y="3" width="1" height="11" fill="#6a6a6a"/> <rect x="0" y="2" width="1" height="10" fill="#ececec"/> <rect x="1" y="11.500" width="9.500" height="1" fill="#dcdcdc"/> <rect x="0" y="13" width="12" height="1" fill="#666"/> <rect x="0" y="12" width="1" height="1" fill="#777"/> <rect x="2.500" y="3.500" width="6" height="5" fill="#fff" stroke="#7a6644" stroke-width="1"/> <rect x="4" y="5" width="3" height="1" fill="#86a4ea"/> <rect x="4" y="9.500" width="1" height="1.700" fill="#2456e0"/><rect x="6" y="9.500" width="1" height="1.700" fill="#2456e0"/> <circle cx="5.500" cy="7.700" r="1.800" fill="#e8a008"/> <path d="M4.300 8.500l1.200 1.800 1.200-1.800z" fill="#dc9400"/><path d="M-.5 7v2.800M-1.300 10.200v1.700" stroke="#1a1a1a" stroke-width="1.100"/></svg>
<span class="tx s" style="left:23px;top:426px;letter-spacing:-0.41px;">OCSP Response Signing</span>
<span class="tx s" style="left:257px;top:426px;">3</span>
<span class="tx s" style="left:407px;top:426px;letter-spacing:-0.61px;">101.0</span>
<span class="tx s" style="left:456px;top:426px;letter-spacing:-0.43px;">OCSP Signing</span>
<svg class="ic" style="left:5px;top:444px" width="14" height="14" viewBox="-2 0 14 14" ><rect x="0" y="1" width="12" height="13" fill="#fcfcfc"/> <path d="M0 0h10.500l1.500 1.500v2.500h-1v-2h-11z" fill="url(#gb)"/> <rect x="10" y="2" width="1" height="10" fill="#d4d4d4"/> <rect x="11" y="3" width="1" height="11" fill="#6a6a6a"/> <rect x="0" y="2" width="1" height="10" fill="#ececec"/> <rect x="1" y="11.500" width="9.500" height="1" fill="#dcdcdc"/> <rect x="0" y="13" width="12" height="1" fill="#666"/> <rect x="0" y="12" width="1" height="1" fill="#777"/> <rect x="2.500" y="3.500" width="6" height="5" fill="#fff" stroke="#7a6644" stroke-width="1"/> <rect x="4" y="5" width="3" height="1" fill="#86a4ea"/> <rect x="4" y="9.500" width="1" height="1.700" fill="#2456e0"/><rect x="6" y="9.500" width="1" height="1.700" fill="#2456e0"/> <circle cx="5.500" cy="7.700" r="1.800" fill="#e8a008"/> <path d="M4.300 8.500l1.200 1.800 1.200-1.800z" fill="#dc9400"/><path d="M-.5 7v2.800M-1.300 10.200v1.700" stroke="#1a1a1a" stroke-width="1.100"/></svg>
<span class="tx s" style="left:23px;top:445px;letter-spacing:-0.55px;">RAS and IAS Server</span>
<span class="tx s" style="left:257px;top:445px;">2</span>
<span class="tx s" style="left:407px;top:445px;letter-spacing:-0.61px;">101.0</span>
<span class="tx s" style="left:456px;top:445px;">Client Authentication, Server Aut</span>
<span class="tx s" style="left:629px;top:445px;letter-spacing:0.18px;">hentication</span>
<svg class="ic" style="left:5px;top:463px" width="14" height="14" viewBox="-2 0 14 14" ><rect x="0" y="1" width="12" height="13" fill="#fcfcfc"/> <path d="M0 0h10.500l1.500 1.500v2.500h-1v-2h-11z" fill="url(#gb)"/> <rect x="10" y="2" width="1" height="10" fill="#d4d4d4"/> <rect x="11" y="3" width="1" height="11" fill="#6a6a6a"/> <rect x="0" y="2" width="1" height="10" fill="#ececec"/> <rect x="1" y="11.500" width="9.500" height="1" fill="#dcdcdc"/> <rect x="0" y="13" width="12" height="1" fill="#666"/> <rect x="0" y="12" width="1" height="1" fill="#777"/> <rect x="2.500" y="3.500" width="6" height="5" fill="#fff" stroke="#7a6644" stroke-width="1"/> <rect x="4" y="5" width="3" height="1" fill="#86a4ea"/> <rect x="4" y="9.500" width="1" height="1.700" fill="#2456e0"/><rect x="6" y="9.500" width="1" height="1.700" fill="#2456e0"/> <circle cx="5.500" cy="7.700" r="1.800" fill="#e8a008"/> <path d="M4.300 8.500l1.200 1.800 1.200-1.800z" fill="#dc9400"/><path d="M-.5 7v2.800M-1.300 10.200v1.700" stroke="#1a1a1a" stroke-width="1.100"/></svg>
<span class="tx s" style="left:23px;top:464px;letter-spacing:0.14px;">Root Certification Authority</span>
<span class="tx s" style="left:257px;top:464px;">1</span>
<span class="tx s" style="left:407px;top:464px;letter-spacing:-0.56px;">5.1</span>
<svg class="ic" style="left:5px;top:482px" width="14" height="14" viewBox="-2 0 14 14" ><rect x="0" y="1" width="12" height="13" fill="#fcfcfc"/> <path d="M0 0h10.500l1.500 1.500v2.500h-1v-2h-11z" fill="url(#gb)"/> <rect x="10" y="2" width="1" height="10" fill="#d4d4d4"/> <rect x="11" y="3" width="1" height="11" fill="#6a6a6a"/> <rect x="0" y="2" width="1" height="10" fill="#ececec"/> <rect x="1" y="11.500" width="9.500" height="1" fill="#dcdcdc"/> <rect x="0" y="13" width="12" height="1" fill="#666"/> <rect x="0" y="12" width="1" height="1" fill="#777"/> <rect x="2.500" y="3.500" width="6" height="5" fill="#fff" stroke="#7a6644" stroke-width="1"/> <rect x="4" y="5" width="3" height="1" fill="#86a4ea"/> <rect x="4" y="9.500" width="1" height="1.700" fill="#2456e0"/><rect x="6" y="9.500" width="1" height="1.700" fill="#2456e0"/> <circle cx="5.500" cy="7.700" r="1.800" fill="#e8a008"/> <path d="M4.300 8.500l1.200 1.800 1.200-1.800z" fill="#dc9400"/><path d="M-.5 7v2.800M-1.300 10.200v1.700" stroke="#1a1a1a" stroke-width="1.100"/></svg>
<span class="tx s" style="left:23px;top:483px;letter-spacing:-0.05px;">Router (Offline request)</span>
<span class="tx s" style="left:257px;top:483px;">1</span>
<span class="tx s" style="left:407px;top:483px;letter-spacing:-0.56px;">4.1</span>
<svg class="ic" style="left:5px;top:501px" width="14" height="14" viewBox="-2 0 14 14" ><rect x="0" y="1" width="12" height="13" fill="#fcfcfc"/> <path d="M0 0h10.500l1.500 1.500v2.500h-1v-2h-11z" fill="url(#gb)"/> <rect x="10" y="2" width="1" height="10" fill="#d4d4d4"/> <rect x="11" y="3" width="1" height="11" fill="#6a6a6a"/> <rect x="0" y="2" width="1" height="10" fill="#ececec"/> <rect x="1" y="11.500" width="9.500" height="1" fill="#dcdcdc"/> <rect x="0" y="13" width="12" height="1" fill="#666"/> <rect x="0" y="12" width="1" height="1" fill="#777"/> <rect x="2.500" y="3.500" width="6" height="5" fill="#fff" stroke="#7a6644" stroke-width="1"/> <rect x="4" y="5" width="3" height="1" fill="#86a4ea"/> <rect x="4" y="9.500" width="1" height="1.700" fill="#2456e0"/><rect x="6" y="9.500" width="1" height="1.700" fill="#2456e0"/> <circle cx="5.500" cy="7.700" r="1.800" fill="#e8a008"/> <path d="M4.300 8.500l1.200 1.800 1.200-1.800z" fill="#dc9400"/><path d="M-.5 7v2.800M-1.300 10.200v1.700" stroke="#1a1a1a" stroke-width="1.100"/></svg>
<span class="tx s" style="left:23px;top:502px;letter-spacing:-0.07px;">Smartcard Logon</span>
<span class="tx s" style="left:257px;top:502px;">1</span>
<span class="tx s" style="left:407px;top:502px;letter-spacing:-0.56px;">6.1</span>
<svg class="ic" style="left:5px;top:520px" width="14" height="14" viewBox="-2 0 14 14" ><rect x="0" y="1" width="12" height="13" fill="#fcfcfc"/> <path d="M0 0h10.500l1.500 1.500v2.500h-1v-2h-11z" fill="url(#gb)"/> <rect x="10" y="2" width="1" height="10" fill="#d4d4d4"/> <rect x="11" y="3" width="1" height="11" fill="#6a6a6a"/> <rect x="0" y="2" width="1" height="10" fill="#ececec"/> <rect x="1" y="11.500" width="9.500" height="1" fill="#dcdcdc"/> <rect x="0" y="13" width="12" height="1" fill="#666"/> <rect x="0" y="12" width="1" height="1" fill="#777"/> <rect x="2.500" y="3.500" width="6" height="5" fill="#fff" stroke="#7a6644" stroke-width="1"/> <rect x="4" y="5" width="3" height="1" fill="#86a4ea"/> <rect x="4" y="9.500" width="1" height="1.700" fill="#2456e0"/><rect x="6" y="9.500" width="1" height="1.700" fill="#2456e0"/> <circle cx="5.500" cy="7.700" r="1.800" fill="#e8a008"/> <path d="M4.300 8.500l1.200 1.800 1.200-1.800z" fill="#dc9400"/><path d="M-.5 7v2.800M-1.300 10.200v1.700" stroke="#1a1a1a" stroke-width="1.100"/></svg>
<span class="tx s" style="left:23px;top:521px;letter-spacing:-0.26px;">Smartcard User</span>
<span class="tx s" style="left:257px;top:521px;">1</span>
<span class="tx s" style="left:407px;top:521px;letter-spacing:-0.37px;">11.1</span>
<svg class="ic" style="left:5px;top:539px" width="14" height="14" viewBox="-2 0 14 14" ><rect x="0" y="1" width="12" height="13" fill="#fcfcfc"/> <path d="M0 0h10.500l1.500 1.500v2.500h-1v-2h-11z" fill="url(#gb)"/> <rect x="10" y="2" width="1" height="10" fill="#d4d4d4"/> <rect x="11" y="3" width="1" height="11" fill="#6a6a6a"/> <rect x="0" y="2" width="1" height="10" fill="#ececec"/> <rect x="1" y="11.500" width="9.500" height="1" fill="#dcdcdc"/> <rect x="0" y="13" width="12" height="1" fill="#666"/> <rect x="0" y="12" width="1" height="1" fill="#777"/> <rect x="2.500" y="3.500" width="6" height="5" fill="#fff" stroke="#7a6644" stroke-width="1"/> <rect x="4" y="5" width="3" height="1" fill="#86a4ea"/> <rect x="4" y="9.500" width="1" height="1.700" fill="#2456e0"/><rect x="6" y="9.500" width="1" height="1.700" fill="#2456e0"/> <circle cx="5.500" cy="7.700" r="1.800" fill="#e8a008"/> <path d="M4.300 8.500l1.200 1.800 1.200-1.800z" fill="#dc9400"/><path d="M-.5 7v2.800M-1.300 10.200v1.700" stroke="#1a1a1a" stroke-width="1.100"/></svg>
<span class="tx s" style="left:23px;top:540px;letter-spacing:0.12px;">Subordinate Certification Authority</span>
<span class="tx s" style="left:257px;top:540px;">1</span>
<span class="tx s" style="left:407px;top:540px;letter-spacing:-0.56px;">5.1</span>
<svg class="ic" style="left:5px;top:558px" width="14" height="14" viewBox="-2 0 14 14" ><rect x="0" y="1" width="12" height="13" fill="#fcfcfc"/> <path d="M0 0h10.500l1.500 1.500v2.500h-1v-2h-11z" fill="url(#gb)"/> <rect x="10" y="2" width="1" height="10" fill="#d4d4d4"/> <rect x="11" y="3" width="1" height="11" fill="#6a6a6a"/> <rect x="0" y="2" width="1" height="10" fill="#ececec"/> <rect x="1" y="11.500" width="9.500" height="1" fill="#dcdcdc"/> <rect x="0" y="13" width="12" height="1" fill="#666"/> <rect x="0" y="12" width="1" height="1" fill="#777"/> <rect x="2.500" y="3.500" width="6" height="5" fill="#fff" stroke="#7a6644" stroke-width="1"/> <rect x="4" y="5" width="3" height="1" fill="#86a4ea"/> <rect x="4" y="9.500" width="1" height="1.700" fill="#2456e0"/><rect x="6" y="9.500" width="1" height="1.700" fill="#2456e0"/> <circle cx="5.500" cy="7.700" r="1.800" fill="#e8a008"/> <path d="M4.300 8.500l1.200 1.800 1.200-1.800z" fill="#dc9400"/><path d="M-.5 7v2.800M-1.300 10.200v1.700" stroke="#1a1a1a" stroke-width="1.100"/></svg>
<span class="tx s" style="left:23px;top:559px;letter-spacing:-0.13px;">Trust List Signing</span>
<span class="tx s" style="left:257px;top:559px;">1</span>
<span class="tx s" style="left:407px;top:559px;letter-spacing:-0.56px;">3.1</span>
<svg class="ic" style="left:5px;top:577px" width="14" height="14" viewBox="-2 0 14 14" ><rect x="0" y="1" width="12" height="13" fill="#fcfcfc"/> <path d="M0 0h10.500l1.500 1.500v2.500h-1v-2h-11z" fill="url(#gb)"/> <rect x="10" y="2" width="1" height="10" fill="#d4d4d4"/> <rect x="11" y="3" width="1" height="11" fill="#6a6a6a"/> <rect x="0" y="2" width="1" height="10" fill="#ececec"/> <rect x="1" y="11.500" width="9.500" height="1" fill="#dcdcdc"/> <rect x="0" y="13" width="12" height="1" fill="#666"/> <rect x="0" y="12" width="1" height="1" fill="#777"/> <rect x="2.500" y="3.500" width="6" height="5" fill="#fff" stroke="#7a6644" stroke-width="1"/> <rect x="4" y="5" width="3" height="1" fill="#86a4ea"/> <rect x="4" y="9.500" width="1" height="1.700" fill="#2456e0"/><rect x="6" y="9.500" width="1" height="1.700" fill="#2456e0"/> <circle cx="5.500" cy="7.700" r="1.800" fill="#e8a008"/> <path d="M4.300 8.500l1.200 1.800 1.200-1.800z" fill="#dc9400"/><path d="M-.5 7v2.800M-1.300 10.200v1.700" stroke="#1a1a1a" stroke-width="1.100"/></svg>
<span class="tx s" style="left:23px;top:578px;letter-spacing:-0.46px;">User</span>
<span class="tx s" style="left:257px;top:578px;">1</span>
<span class="tx s" style="left:407px;top:578px;letter-spacing:-0.56px;">3.1</span>
<svg class="ic" style="left:5px;top:596px" width="14" height="14" viewBox="-2 0 14 14" ><rect x="0" y="1" width="12" height="13" fill="#fcfcfc"/> <path d="M0 0h10.500l1.500 1.500v2.500h-1v-2h-11z" fill="url(#gb)"/> <rect x="10" y="2" width="1" height="10" fill="#d4d4d4"/> <rect x="11" y="3" width="1" height="11" fill="#6a6a6a"/> <rect x="0" y="2" width="1" height="10" fill="#ececec"/> <rect x="1" y="11.500" width="9.500" height="1" fill="#dcdcdc"/> <rect x="0" y="13" width="12" height="1" fill="#666"/> <rect x="0" y="12" width="1" height="1" fill="#777"/> <rect x="2.500" y="3.500" width="6" height="5" fill="#fff" stroke="#7a6644" stroke-width="1"/> <rect x="4" y="5" width="3" height="1" fill="#86a4ea"/> <rect x="4" y="9.500" width="1" height="1.700" fill="#2456e0"/><rect x="6" y="9.500" width="1" height="1.700" fill="#2456e0"/> <circle cx="5.500" cy="7.700" r="1.800" fill="#e8a008"/> <path d="M4.300 8.500l1.200 1.800 1.200-1.800z" fill="#dc9400"/><path d="M-.5 7v2.800M-1.300 10.200v1.700" stroke="#1a1a1a" stroke-width="1.100"/></svg>
<span class="tx s" style="left:23px;top:597px;letter-spacing:-0.2px;">User Signature Only</span>
<span class="tx s" style="left:257px;top:597px;">1</span>
<span class="tx s" style="left:407px;top:597px;letter-spacing:-0.56px;">4.1</span>
<div class="abs" style="left:21px;top:614px;width:739px;height:19px;background:#f5f5f5"></div>
<svg class="ic" style="left:5px;top:615px" width="14" height="14" viewBox="-2 0 14 14" ><rect x="0" y="1" width="12" height="13" fill="#fcfcfc"/> <path d="M0 0h10.500l1.500 1.500v2.500h-1v-2h-11z" fill="url(#gb)"/> <rect x="10" y="2" width="1" height="10" fill="#d4d4d4"/> <rect x="11" y="3" width="1" height="11" fill="#6a6a6a"/> <rect x="0" y="2" width="1" height="10" fill="#ececec"/> <rect x="1" y="11.500" width="9.500" height="1" fill="#dcdcdc"/> <rect x="0" y="13" width="12" height="1" fill="#666"/> <rect x="0" y="12" width="1" height="1" fill="#777"/> <rect x="2.500" y="3.500" width="6" height="5" fill="#fff" stroke="#7a6644" stroke-width="1"/> <rect x="4" y="5" width="3" height="1" fill="#86a4ea"/> <rect x="4" y="9.500" width="1" height="1.700" fill="#2456e0"/><rect x="6" y="9.500" width="1" height="1.700" fill="#2456e0"/> <circle cx="5.500" cy="7.700" r="1.800" fill="#e8a008"/> <path d="M4.300 8.500l1.200 1.800 1.200-1.800z" fill="#dc9400"/><path d="M-.5 7v2.800M-1.300 10.200v1.700" stroke="#1a1a1a" stroke-width="1.100"/></svg>
<svg class="ic" style="left:5px;top:615px" width="14" height="14"><path d="M2 0h12v14h-12v-3h-2v-3h1v-2h1z" fill="url(#dith)"/></svg>
<span class="tx s" style="left:23px;top:616px;letter-spacing:-0.41px;">Web Server</span>
<span class="tx s" style="left:257px;top:616px;">1</span>
<span class="tx s" style="left:407px;top:616px;letter-spacing:-0.56px;">4.1</span>
<svg class="ic" style="left:5px;top:634px" width="14" height="14" viewBox="-2 0 14 14" ><rect x="0" y="1" width="12" height="13" fill="#fcfcfc"/> <path d="M0 0h10.500l1.500 1.500v2.500h-1v-2h-11z" fill="url(#gb)"/> <rect x="10" y="2" width="1" height="10" fill="#d4d4d4"/> <rect x="11" y="3" width="1" height="11" fill="#6a6a6a"/> <rect x="0" y="2" width="1" height="10" fill="#ececec"/> <rect x="1" y="11.500" width="9.500" height="1" fill="#dcdcdc"/> <rect x="0" y="13" width="12" height="1" fill="#666"/> <rect x="0" y="12" width="1" height="1" fill="#777"/> <rect x="2.500" y="3.500" width="6" height="5" fill="#fff" stroke="#7a6644" stroke-width="1"/> <rect x="4" y="5" width="3" height="1" fill="#86a4ea"/> <rect x="4" y="9.500" width="1" height="1.700" fill="#2456e0"/><rect x="6" y="9.500" width="1" height="1.700" fill="#2456e0"/> <circle cx="5.500" cy="7.700" r="1.800" fill="#e8a008"/> <path d="M4.300 8.500l1.200 1.800 1.200-1.800z" fill="#dc9400"/><path d="M-.5 7v2.800M-1.300 10.200v1.700" stroke="#1a1a1a" stroke-width="1.100"/></svg>
<span class="tx s" style="left:23px;top:635px;letter-spacing:0.18px;">Workstation Authentication</span>
<span class="tx s" style="left:257px;top:635px;">2</span>
<span class="tx s" style="left:407px;top:635px;letter-spacing:-0.61px;">101.0</span>
<span class="tx s" style="left:456px;top:635px;letter-spacing:0.12px;">Client Authentication</span>
</div>
<div class="abs" style="left:966px;top:85px;width:294px;height:20px;background:#f5f5f5"></div>
<div class="abs" style="left:966px;top:105px;width:294px;height:1px;background:#8c8c8c"></div>
<span class="tx sb" style="left:971px;top:88px;letter-spacing:-0.43px;">Actions</span>
<div class="abs" style="left:966px;top:107px;width:294px;height:25px;background:linear-gradient(#b9d0ea,#a8c3e2 45%,#8eafd5)"></div>
<span class="tx s" style="left:973px;top:112px;letter-spacing:-0.04px;">Certificate Templates (ad.helena.gg)</span>
<svg class="ic" style="left:1244px;top:116px" width="10" height="6"><path d="M0 6l4.750-5 4.750 5z" fill="#000"/></svg>
<span class="tx s" style="left:997px;top:136px;letter-spacing:0.14px;">More Actions</span>
<svg class="ic" style="left:1246px;top:138px" width="6" height="11"><path d="M0 0l5.500 5.500-5.500 5.500z" fill="#000"/></svg>
<div class="abs" style="left:966px;top:161px;width:294px;height:25px;background:linear-gradient(#b9d0ea,#a8c3e2 45%,#8eafd5)"></div>
<span class="tx s" style="left:973px;top:166px;letter-spacing:-0.41px;">Web Server</span>
<svg class="ic" style="left:1244px;top:170px" width="10" height="6"><path d="M0 6l4.750-5 4.750 5z" fill="#000"/></svg>
<span class="tx s" style="left:997px;top:190px;letter-spacing:0.14px;">More Actions</span>
<svg class="ic" style="left:1246px;top:192px" width="6" height="11"><path d="M0 0l5.500 5.500-5.500 5.500z" fill="#000"/></svg>
<div class="abs" style="left:431px;top:131px;width:397px;height:558px;border:1px solid #a0a0a0;background:#f5f5f5;"></div>
<div class="abs" style="left:432px;top:132px;width:397px;height:30px;background:#fff"></div>
<span class="tx s" style="left:441px;top:139px;letter-spacing:-0.08px;color:#999">Properties of New Template</span>
<svg class="ic" style="left:809px;top:141px" width="11" height="11"><path d="M0 0l10 10M10 0l-10 10" stroke="#8a8a8a" stroke-width="1"/></svg>
<div class="abs" style="left:440px;top:171px;width:123px;height:17px;border:1px solid #d9d9d9;background:#f5f5f5;"></div>
<span class="tx m" style="left:469.3px;top:173px;transform:scaleX(.88);transform-origin:0 0;">Subject Name</span>
<div class="abs" style="left:564px;top:171px;width:87px;height:17px;border:1px solid #d9d9d9;background:#f5f5f5;"></div>
<span class="tx m" style="left:592.9px;top:173px;transform:scaleX(.88);transform-origin:0 0;">Server</span>
<div class="abs" style="left:652px;top:171px;width:165px;height:17px;border:1px solid #d9d9d9;background:#f5f5f5;"></div>
<span class="tx m" style="left:680.0px;top:173px;transform:scaleX(.88);transform-origin:0 0;">Issuance Requirements</span>
<div class="abs" style="left:440px;top:189px;width:70px;height:17px;border:1px solid #d9d9d9;background:#f5f5f5;"></div>
<span class="tx m" style="left:445.8px;top:191px;transform:scaleX(.88);transform-origin:0 0;">Compatibility</span>
<div class="abs" style="left:511px;top:189px;width:50px;height:17px;border:1px solid #d9d9d9;background:#f5f5f5;"></div>
<span class="tx m" style="left:518.2px;top:191px;transform:scaleX(.88);transform-origin:0 0;">General</span>
<div class="abs" style="left:562px;top:189px;width:97px;height:17px;border:1px solid #d9d9d9;background:#f5f5f5;"></div>
<span class="tx m" style="left:570.7px;top:191px;transform:scaleX(.88);transform-origin:0 0;">Request Handing</span>
<div class="abs" style="left:660px;top:189px;width:75px;height:17px;border:1px solid #d9d9d9;background:#f5f5f5;"></div>
<span class="tx m" style="left:666.8px;top:191px;transform:scaleX(.88);transform-origin:0 0;">Cryptography</span>
<div class="abs" style="left:736px;top:189px;width:81px;height:17px;border:1px solid #d9d9d9;background:#f5f5f5;"></div>
<span class="tx m" style="left:742.3px;top:191px;transform:scaleX(.88);transform-origin:0 0;">Key Attestation</span>
<div class="abs" style="left:440px;top:207px;width:168px;height:17px;border:1px solid #d9d9d9;background:#f5f5f5;"></div>
<span class="tx m" style="left:471.1px;top:209px;transform:scaleX(.88);transform-origin:0 0;">Superseded Templates</span>
<div class="abs" style="left:609px;top:207px;width:112px;height:17px;border:1px solid #d9d9d9;background:#f5f5f5;"></div>
<span class="tx m" style="left:640.2px;top:209px;transform:scaleX(.88);transform-origin:0 0;">Extensions</span>
<div class="abs" style="left:724px;top:207px;width:93px;height:17px;border:1px solid #d9d9d9;background:#f5f5f5;"></div>
<span class="tx m" style="left:752.4px;top:209px;transform:scaleX(.88);transform-origin:0 0;">Security</span>
<div class="abs" style="left:438px;top:225px;width:381px;height:426px;border:1px solid #dadada;background:#fff;"></div>
<div class="abs" style="left:442px;top:228px;width:376px;height:422px;background:#f5f5f5"></div>
<span class="tx m" style="left:454px;top:237px;transform:scaleX(.88);transform-origin:0 0;">To modify an extension, select it, and then click Edit.</span>
<span class="tx m" style="left:454px;top:273px;transform:scaleX(.88);transform-origin:0 0;">Extensions included in this template:</span>
<div class="abs" style="left:453px;top:290px;width:354px;height:123px;border:1px solid #72788a;background:#fff;"></div>
<svg class="ic" style="left:456px;top:292px" width="16" height="16" viewBox="0 0 16 16" ><rect x=".5" y=".5" width="14" height="15" rx="1.600" fill="#fff" stroke="#767c82"/> <path d="M1.500 1.500h11" stroke="#d0dcec"/><rect x="12" y="1" width="1" height="1" fill="#3a5a9a"/> <path d="M2.500 12.500v-7h3v-1.500h7v8.500z" fill="#fff" stroke="#8c9096"/> <path d="M6 5.500h2M9 5.500h2" stroke="#e8e8e8"/> <rect x="3.800" y="7.800" width="1.300" height="1.300" fill="#00b0f0"/><rect x="3.900" y="10" width="1.100" height="1.100" fill="#9a9a9a"/> <path d="M6 8.500h5M6 10.500h5" stroke="#8e9296"/> <rect x="6" y="13.300" width="3.200" height="1.700" fill="#1cc0f0"/><rect x="10" y="13.800" width="2.600" height="1.200" fill="#b0b0b0"/></svg>
<div class="abs" style="left:456px;top:292px;width:16px;height:16px;background:rgba(0,120,215,.62)"></div>
<div class="abs" style="left:472px;top:292px;width:109px;height:16px;background:#f5f5f5"></div>
<span class="tx m" style="left:474px;top:292px;transform:scaleX(.88);transform-origin:0 0;">Application Policies</span>
<svg class="ic" style="left:456px;top:309px" width="16" height="16" viewBox="0 0 16 16" ><rect x=".5" y=".5" width="14" height="15" rx="1.600" fill="#fff" stroke="#767c82"/> <path d="M1.500 1.500h11" stroke="#d0dcec"/><rect x="12" y="1" width="1" height="1" fill="#3a5a9a"/> <path d="M2.500 12.500v-7h3v-1.500h7v8.500z" fill="#fff" stroke="#8c9096"/> <path d="M6 5.500h2M9 5.500h2" stroke="#e8e8e8"/> <rect x="3.800" y="7.800" width="1.300" height="1.300" fill="#00b0f0"/><rect x="3.900" y="10" width="1.100" height="1.100" fill="#9a9a9a"/> <path d="M6 8.500h5M6 10.500h5" stroke="#8e9296"/> <rect x="6" y="13.300" width="3.200" height="1.700" fill="#1cc0f0"/><rect x="10" y="13.800" width="2.600" height="1.200" fill="#b0b0b0"/></svg>
<span class="tx m" style="left:474px;top:309px;transform:scaleX(.88);transform-origin:0 0;">Basic Constraints</span>
<svg class="ic" style="left:456px;top:326px" width="16" height="16" viewBox="0 0 16 16" ><rect x=".5" y=".5" width="14" height="15" rx="1.600" fill="#fff" stroke="#767c82"/> <path d="M1.500 1.500h11" stroke="#d0dcec"/><rect x="12" y="1" width="1" height="1" fill="#3a5a9a"/> <path d="M2.500 12.500v-7h3v-1.500h7v8.500z" fill="#fff" stroke="#8c9096"/> <path d="M6 5.500h2M9 5.500h2" stroke="#e8e8e8"/> <rect x="3.800" y="7.800" width="1.300" height="1.300" fill="#00b0f0"/><rect x="3.900" y="10" width="1.100" height="1.100" fill="#9a9a9a"/> <path d="M6 8.500h5M6 10.500h5" stroke="#8e9296"/> <rect x="6" y="13.300" width="3.200" height="1.700" fill="#1cc0f0"/><rect x="10" y="13.800" width="2.600" height="1.200" fill="#b0b0b0"/></svg>
<span class="tx m" style="left:474px;top:326px;transform:scaleX(.88);transform-origin:0 0;">Certificate Template Information</span>
<svg class="ic" style="left:456px;top:343px" width="16" height="16" viewBox="0 0 16 16" ><rect x=".5" y=".5" width="14" height="15" rx="1.600" fill="#fff" stroke="#767c82"/> <path d="M1.500 1.500h11" stroke="#d0dcec"/><rect x="12" y="1" width="1" height="1" fill="#3a5a9a"/> <path d="M2.500 12.500v-7h3v-1.500h7v8.500z" fill="#fff" stroke="#8c9096"/> <path d="M6 5.500h2M9 5.500h2" stroke="#e8e8e8"/> <rect x="3.800" y="7.800" width="1.300" height="1.300" fill="#00b0f0"/><rect x="3.900" y="10" width="1.100" height="1.100" fill="#9a9a9a"/> <path d="M6 8.500h5M6 10.500h5" stroke="#8e9296"/> <rect x="6" y="13.300" width="3.200" height="1.700" fill="#1cc0f0"/><rect x="10" y="13.800" width="2.600" height="1.200" fill="#b0b0b0"/></svg>
<span class="tx m" style="left:474px;top:343px;transform:scaleX(.88);transform-origin:0 0;">Issuance Policies</span>
<svg class="ic" style="left:456px;top:360px" width="16" height="16" viewBox="0 0 16 16" ><rect x=".5" y=".5" width="14" height="15" rx="1.600" fill="#fff" stroke="#767c82"/> <path d="M1.500 1.500h11" stroke="#d0dcec"/><rect x="12" y="1" width="1" height="1" fill="#3a5a9a"/> <path d="M2.500 12.500v-7h3v-1.500h7v8.500z" fill="#fff" stroke="#8c9096"/> <path d="M6 5.500h2M9 5.500h2" stroke="#e8e8e8"/> <rect x="3.800" y="7.800" width="1.300" height="1.300" fill="#00b0f0"/><rect x="3.900" y="10" width="1.100" height="1.100" fill="#9a9a9a"/> <path d="M6 8.500h5M6 10.500h5" stroke="#8e9296"/> <rect x="6" y="13.300" width="3.200" height="1.700" fill="#1cc0f0"/><rect x="10" y="13.800" width="2.600" height="1.200" fill="#b0b0b0"/></svg>
<svg class="ic" style="left:455px;top:367px" width="10" height="9"><path d="M5 .5l4.500 8h-9z" fill="#ffe100" stroke="#c8a800" stroke-width=".8"/><path d="M5 3v3M5 7v1" stroke="#a01010" stroke-width="1.200"/></svg>
<span class="tx m" style="left:474px;top:360px;transform:scaleX(.88);transform-origin:0 0;">Key Usage</span>
<div class="abs" style="left:735px;top:426px;width:71px;height:19px;border:1px solid #abaeab;background:#e3e3e3;"></div><span class="tx m" style="left:758.0px;top:429px;transform:scaleX(.88);transform-origin:0 0;">Edit...</span>
<span class="tx m" style="left:454px;top:461px;transform:scaleX(.88);transform-origin:0 0;">Description of Application Policies:</span>
<div class="abs" style="left:453px;top:479px;width:354px;height:89px;border:1px solid #72788a;background:#fff;"></div>
<div class="abs" style="left:791px;top:480px;width:17px;height:89px;background:#f5f5f5"></div>
<svg class="ic" style="left:791px;top:480px" width="17" height="89"><path d="M4 12l3.500-3.500 3.500 3.500M4 77l3.500 3.500 3.500-3.500" stroke="#bfbfbf" stroke-width="1.500" fill="none"/></svg>
<span class="tx m" style="left:457px;top:480px;transform:scaleX(.88);transform-origin:0 0;">Server Authentication</span>
<div class="abs" style="left:507px;top:661px;width:71px;height:19px;border:1px solid #abaeab;background:#e3e3e3;"></div><span class="tx m" style="left:535.9px;top:664px;transform:scaleX(.88);transform-origin:0 0;">OK</span>
<div class="abs" style="left:588px;top:661px;width:71px;height:19px;border:1px solid #abaeab;background:#e3e3e3;"></div><span class="tx m" style="left:608.1px;top:664px;transform:scaleX(.88);transform-origin:0 0;">Cancel</span>
<div class="abs" style="left:668px;top:661px;width:71px;height:19px;border:1px solid #abaeab;background:#e3e3e3;"></div><span class="tx m" style="left:691.3px;top:664px;transform:scaleX(.88);transform-origin:0 0;">Apply</span>
<div class="abs" style="left:749px;top:661px;width:71px;height:19px;border:1px solid #abaeab;background:#e3e3e3;"></div><span class="tx m" style="left:774.6px;top:664px;transform:scaleX(.88);transform-origin:0 0;">Help</span>
<div class="abs" style="left:484px;top:202px;width:292px;height:415px;border:1px solid #505050;background:#f5f5f5;"></div>
<div class="abs" style="left:485px;top:203px;width:292px;height:30px;background:#fff"></div>
<span class="tx s" style="left:493px;top:210px;letter-spacing:-0.07px;">Edit Application Policies Extension</span>
<svg class="ic" style="left:757px;top:212px" width="11" height="11"><path d="M.5 .5l10 10M10.500 .5l-10 10" stroke="#000" stroke-width="1.100"/></svg>
<span class="tx t" style="left:496px;top:243px;letter-spacing:-0.1px;">An application policy defines how a certificate can be</span>
<span class="tx t" style="left:496px;top:256px;letter-spacing:-0.18px;">used.</span>
<span class="tx t" style="left:496px;top:299px;letter-spacing:-0.22px;">Application policies:</span>
<div class="abs" style="left:496px;top:316px;width:269px;height:143px;border:1px solid #72788a;background:#fff;"></div>
<div class="abs" style="left:498px;top:318px;width:267px;height:13px;background:#0078d7"></div>
<span class="tx t" style="left:500px;top:317px;letter-spacing:-0.01px;color:#fff">Client Authentication</span>
<span class="tx t" style="left:500px;top:330px;letter-spacing:-0.03px;">Server Authentication</span>
<div class="abs" style="left:531px;top:466px;width:71px;height:19px;border:1px solid #abaeab;background:#e3e3e3;"></div><span class="tx t" style="left:552.3px;top:469px;letter-spacing:0.29px;">Add...</span>
<div class="abs" style="left:612px;top:466px;width:70px;height:19px;border:1px solid #abaeab;background:#e3e3e3;"></div><span class="tx t" style="left:633.2px;top:469px;letter-spacing:0.2px;">Edit...</span>
<div class="abs" style="left:692px;top:466px;width:71px;height:19px;border:1px solid #abaeab;background:#e3e3e3;"></div><span class="tx t" style="left:709.0px;top:469px;letter-spacing:-0.33px;">Remove</span>
<div class="abs" style="left:496px;top:498px;width:11px;height:11px;border:1px solid #333;background:#fff;"></div>
<span class="tx t" style="left:511px;top:497px;letter-spacing:-0.09px;">Make this extension critical</span>
<div class="abs" style="left:612px;top:585px;width:70px;height:19px;border:1px solid #0078d7;background:#e3e3e3;box-shadow:inset 0 0 0 1px #0078d7;"></div><span class="tx t" style="left:641.0px;top:588px;letter-spacing:-0.95px;">OK</span>
<div class="abs" style="left:692px;top:585px;width:71px;height:19px;border:1px solid #abaeab;background:#e3e3e3;"></div><span class="tx t" style="left:712.5px;top:588px;letter-spacing:-0.38px;">Cancel</span>
</body></html>
